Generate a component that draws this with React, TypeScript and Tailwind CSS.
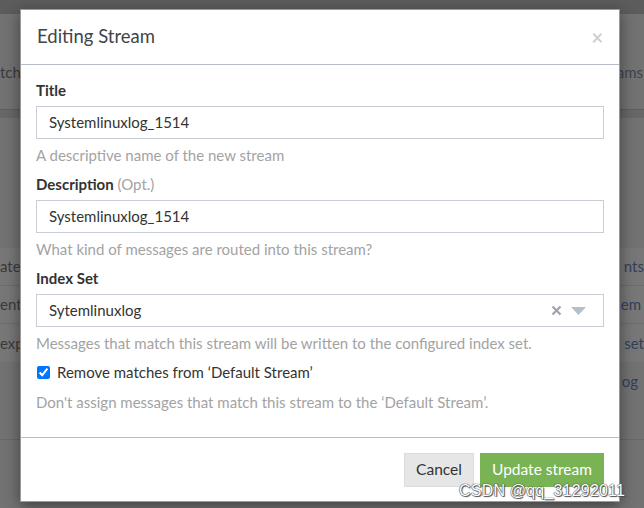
import React from "react";

function Field({
  label,
  opt,
  value,
  help,
  select,
}: {
  label: string;
  opt?: boolean;
  value: string;
  help: string;
  select?: boolean;
}) {
  return (
    <div className="flex flex-col">
      <label className="h-[20px] text-[15px] leading-[20px] font-bold text-[#333]">
        {label}
        {opt && <span className="font-normal text-[#a3a3a3]"> (Opt.)</span>}
      </label>
      <div className="mt-[6px] h-[33px] border border-[#c8cdd6] bg-white flex items-center pl-[12px] pr-[17px] text-[15px] text-[#333]">
        <span className="flex-1">{value}</span>
        {select && (
          <div className="flex items-center gap-[9px]">
            <svg width="11" height="11" viewBox="0 0 11 11">
              <path d="M1.5 1.5 L9.5 9.5 M9.5 1.5 L1.5 9.5" stroke="#9ea3ab" strokeWidth="2.2" />
            </svg>
            <svg width="15" height="8" viewBox="0 0 15 8">
              <path d="M0 0 L15 0 L7.5 8 Z" fill="#b7bfcc" />
            </svg>
          </div>
        )}
      </div>
      <p className="mt-[6px] h-[20px] text-[15px] leading-[20px] text-[#a3a3a3]">{help}</p>
    </div>
  );
}

export default function App() {
  return (
    <div
      className="relative w-[644px] h-[508px] overflow-hidden bg-[#727272] text-[#333]"
      style={{ fontFamily: "Lato, 'Noto Sans', sans-serif" }}
    >
      {/* page behind the backdrop */}
      <div className="flex flex-col text-[15px] text-[#3a3a3a]">
        <div className="h-[14px] bg-[#5c5c5c]" />
        <div className="h-[95px] flex items-center justify-between pt-[22px]">
          <span>tch</span>
          <span className="text-[#3d4350] pr-[1px]">ams</span>
        </div>
        <div className="h-[9px] bg-[#676767] border-t border-[#5e5e5e]" />
        <div className="h-[130px]" />
        <div className="flex flex-col bg-[#777]">
          <div className="h-[38px] flex items-center justify-between border-b border-[#6c6c6c]">
            <span>ate</span>
            <span className="text-[#34405a]">nts</span>
          </div>
          <div className="h-[38px] flex items-center justify-between border-b border-[#6c6c6c]">
            <span>ent</span>
            <span className="text-[#34405a] pr-[3px]">em</span>
          </div>
          <div className="h-[38px] flex items-center justify-between">
            <span>exp</span>
            <span className="text-[#34405a]">x set</span>
          </div>
        </div>
        <div className="h-[38px] flex items-center justify-end pr-[6px] text-[#34405a]">og</div>
        <div className="h-[40px] border-b border-[#686868]" />
      </div>

      {/* modal */}
      <div className="absolute left-[20px] top-[9px] w-[600px] bg-white border border-[#9a9a9a] shadow-[0_4px_14px_rgba(0,0,0,0.45)]">
        <div className="h-[55px] flex items-center justify-between pl-[16px] pr-[16px] border-b border-[#b5bcc7]">
          <h4 className="text-[18.5px] text-[#3f444a]">Editing Stream</h4>
          <span className="text-[20px] font-bold text-[#d0d0d0] leading-none">×</span>
        </div>
        <div className="px-[15px] pt-[15px] pb-[25px] flex flex-col gap-[9px]">
          <Field label="Title" value="Systemlinuxlog_1514" help="A descriptive name of the new stream" />
          <Field
            label="Description"
            opt
            value="Systemlinuxlog_1514"
            help="What kind of messages are routed into this stream?"
          />
          <Field
            label="Index Set"
            value="Sytemlinuxlog"
            help="Messages that match this stream will be written to the configured index set."
            select
          />
          <div className="flex flex-col">
            <label className="h-[20px] flex items-center gap-[7px] pl-[1px] text-[15px] text-[#333]">
              <input type="checkbox" checked readOnly className="w-[13px] h-[13px] accent-[#0075ff]" />
              Remove matches from ‘Default Stream’
            </label>
            <p className="mt-[10px] h-[20px] text-[15px] leading-[20px] text-[#a3a3a3]">
              Don't assign messages that match this stream to the ‘Default Stream’.
            </p>
          </div>
        </div>
        <div className="border-t border-[#b5bcc7] px-[15px] pt-[15px] pb-[14px] flex justify-end gap-[6px]">
          <button className="h-[34px] w-[70px] bg-[#e6e6e6] border border-[#dcdcdc] text-[15.5px] text-[#333]">
            Cancel
          </button>
          <button className="h-[34px] w-[124px] bg-[#79b353] text-[15.5px] text-white">Update stream</button>
        </div>
      </div>

      {/* watermark */}
      <span
        className="absolute left-[459px] top-[479px] text-[16px] text-white tracking-[0.2px]"
        style={{
          fontFamily: "'Liberation Sans', Arial, sans-serif",
          textShadow: "0 0 1px #333, 0 0 1px #333, 1px 1px 1px #555",
        }}
      >
        CSDN @qq_31292011
      </span>
    </div>
  );
}
